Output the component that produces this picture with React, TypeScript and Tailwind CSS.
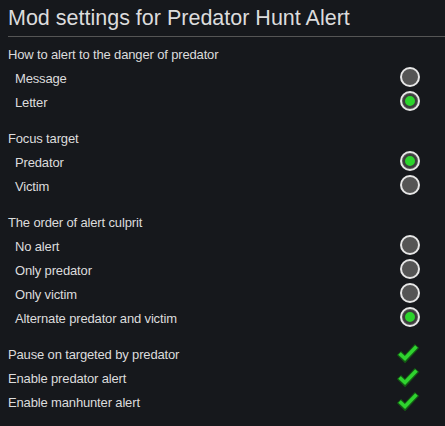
import React from "react";

type Section =
  | { kind: "radio"; title: string; options: string[]; selected: number }
  | { kind: "checks"; items: string[] };

const sections: Section[] = [
  {
    kind: "radio",
    title: "How to alert to the danger of predator",
    options: ["Message", "Letter"],
    selected: 1,
  },
  {
    kind: "radio",
    title: "Focus target",
    options: ["Predator", "Victim"],
    selected: 0,
  },
  {
    kind: "radio",
    title: "The order of alert culprit",
    options: ["No alert", "Only predator", "Only victim", "Alternate predator and victim"],
    selected: 3,
  },
  {
    kind: "checks",
    items: ["Pause on targeted by predator", "Enable predator alert", "Enable manhunter alert"],
  },
];

function Radio({ on }: { on: boolean }) {
  return (
    <div className="flex h-5 w-5 items-center justify-center rounded-full border-2 border-[#e6e6e6] bg-[#555555]">
      {on && <div className="h-[14px] w-[14px] rounded-full border-2 border-[#3c3c3c] bg-[#2cd42c]" />}
    </div>
  );
}

function Check() {
  return (
    <svg width="24" height="20" viewBox="0 0 24 20">
      <polyline points="3,10 9,16 21,3" fill="none" stroke="#145a14" strokeWidth="6" strokeLinejoin="miter" />
      <polyline points="3.5,10.5 9,15.5 20.5,3.5" fill="none" stroke="#2fd22f" strokeWidth="3.6" />
    </svg>
  );
}

export default function App() {
  return (
    <div
      className="min-h-[426px] w-[445px] bg-[#16181c] pl-2 text-[#dcdcdc]"
      style={{ fontFamily: '"Liberation Sans", Arial, sans-serif' }}
    >
      {/* Header */}
      <div className="flex h-[37px] items-center border-b border-[#555555] pt-[2px]">
        <h1 className="text-[21.5px] leading-none">Mod settings for Predator Hunt Alert</h1>
      </div>

      <div className="mt-1 flex flex-col gap-3 pr-[25px] text-[13px] tracking-[-0.15px]">
        {sections.map((s, i) =>
          s.kind === "radio" ? (
            <div key={i}>
              <div className="flex h-6 items-center pt-[3px]">{s.title}</div>
              {s.options.map((o, j) => (
                <div key={o} className="flex h-6 items-center justify-between pl-[7px]">
                  <span className="pt-[3px]">{o}</span>
                  <Radio on={j === s.selected} />
                </div>
              ))}
            </div>
          ) : (
            <div key={i}>
              {s.items.map((it) => (
                <div key={it} className="flex h-6 items-center justify-between">
                  <span className="pt-[3px]">{it}</span>
                  <Check />
                </div>
              ))}
            </div>
          )
        )}
      </div>
    </div>
  );
}
